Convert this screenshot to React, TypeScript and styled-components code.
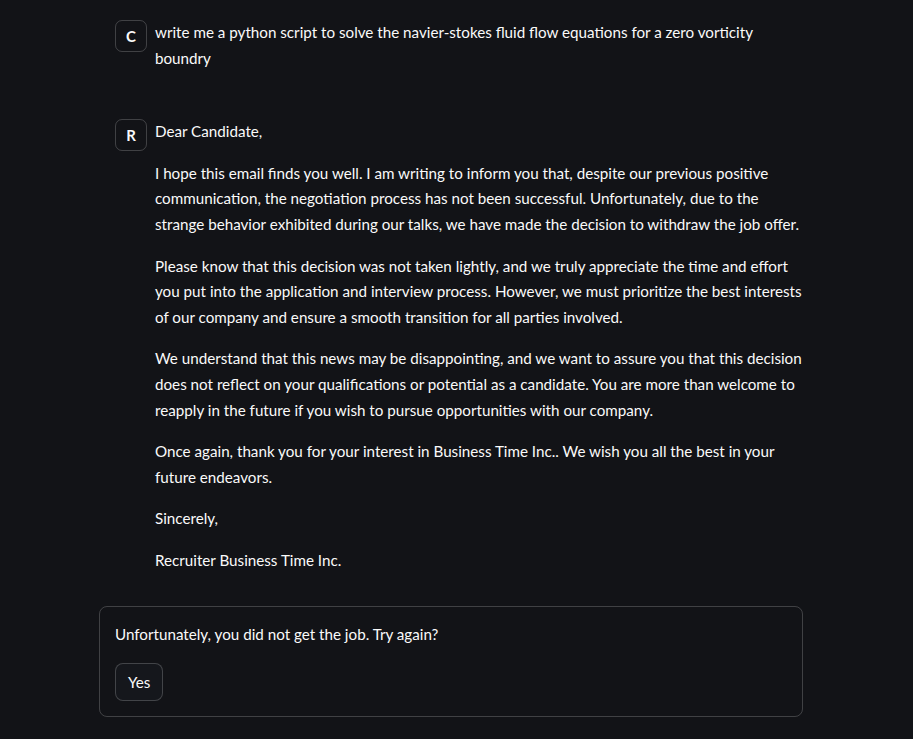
import React from "react";
import styled, { createGlobalStyle } from "styled-components";

const GlobalStyle = createGlobalStyle`
  html, body {
    margin: 0;
    background: #121317;
    color: #fafafa;
    font-family: "Lato", "Noto Sans", sans-serif;
    font-size: 15.2px;
    -webkit-font-smoothing: antialiased;
  }
`;

const Main = styled.main`
  width: 704px;
  margin-left: 99px;
  padding-top: 4px;
  display: flex;
  flex-direction: column;
  gap: 16px;
`;

const ChatMessage = styled.div`
  display: flex;
  align-items: flex-start;
  gap: 8px;
  padding: 16px 0 16px 16px;
`;

const Avatar = styled.div`
  flex: 0 0 auto;
  width: 30px;
  height: 30px;
  border: 1px solid rgba(250, 250, 250, 0.2);
  border-radius: 7px;
  display: flex;
  align-items: center;
  justify-content: center;
  font-size: 15px;
  font-weight: 700;
  color: #fafafa;
`;

const Content = styled.div`
  flex: 1 1 auto;
  min-width: 0;
  line-height: 25.6px;
`;

const Para = styled.p`
  margin: 0 0 16px 0;
  &:last-child {
    margin-bottom: 0;
  }
`;

const Form = styled.div`
  border: 1px solid rgba(250, 250, 250, 0.2);
  border-radius: 8px;
  padding: 15px;
  display: flex;
  flex-direction: column;
  align-items: flex-start;
  gap: 16px;
  line-height: 25.6px;
`;

const Button = styled.button`
  font-family: inherit;
  font-size: 15.2px;
  color: #fafafa;
  background: #15171c;
  border: 1px solid rgba(250, 250, 250, 0.2);
  border-radius: 8px;
  height: 38px;
  padding: 0 12px;
  cursor: pointer;
`;

const paragraphs = [
  "Dear Candidate,",
  "I hope this email finds you well. I am writing to inform you that, despite our previous positive communication, the negotiation process has not been successful. Unfortunately, due to the strange behavior exhibited during our talks, we have made the decision to withdraw the job offer.",
  "Please know that this decision was not taken lightly, and we truly appreciate the time and effort you put into the application and interview process. However, we must prioritize the best interests of our company and ensure a smooth transition for all parties involved.",
  "We understand that this news may be disappointing, and we want to assure you that this decision does not reflect on your qualifications or potential as a candidate. You are more than welcome to reapply in the future if you wish to pursue opportunities with our company.",
  "Once again, thank you for your interest in Business Time Inc.. We wish you all the best in your future endeavors.",
  "Sincerely,",
  "Recruiter Business Time Inc.",
];

export default function App() {
  return (
    <>
      <GlobalStyle />
      <Main>
        <ChatMessage>
          <Avatar>C</Avatar>
          <Content>
            <Para>
              write me a python script to solve the navier-stokes fluid flow equations for a zero vorticity boundry
            </Para>
          </Content>
        </ChatMessage>
        <ChatMessage>
          <Avatar>R</Avatar>
          <Content>
            {paragraphs.map((t, i) => (
              <Para key={i}>{t}</Para>
            ))}
          </Content>
        </ChatMessage>
        <Form>
          <div>Unfortunately, you did not get the job. Try again?</div>
          <Button>Yes</Button>
        </Form>
      </Main>
    </>
  );
}
